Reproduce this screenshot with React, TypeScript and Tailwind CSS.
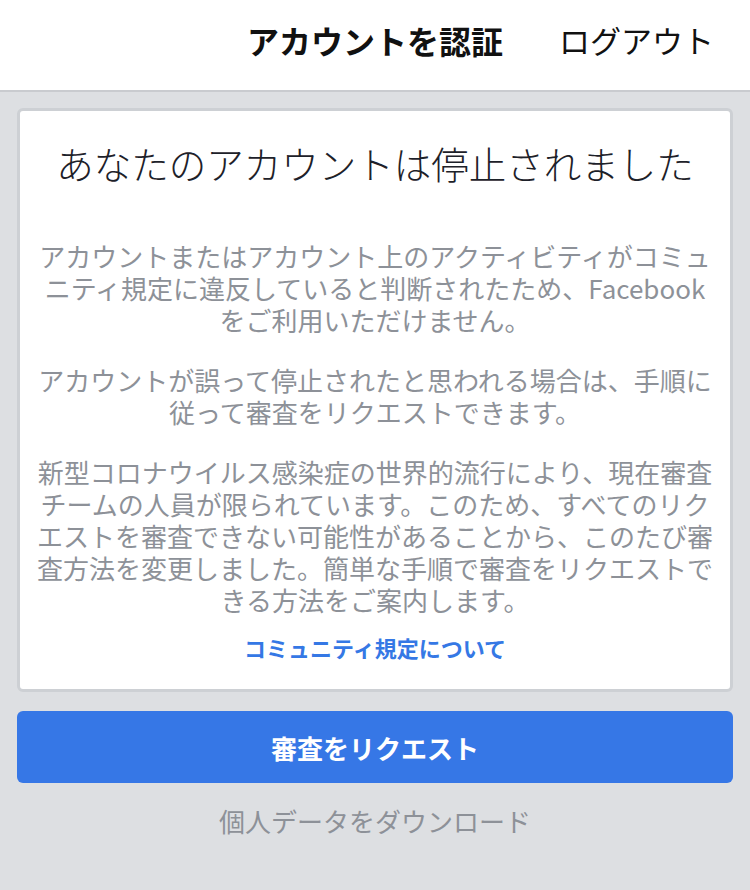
import { Fragment } from "react";

const paragraphs: string[][] = [
  [
    "アカウントまたはアカウント上のアクティビティがコミュ",
    "ニティ規定に違反していると判断されたため、Facebook",
    "をご利用いただけません。",
  ],
  [
    "アカウントが誤って停止されたと思われる場合は、手順に",
    "従って審査をリクエストできます。",
  ],
  [
    "新型コロナウイルス感染症の世界的流行により、現在審査",
    "チームの人員が限られています。このため、すべてのリク",
    "エストを審査できない可能性があることから、このたび審",
    "査方法を変更しました。簡単な手順で審査をリクエストで",
    "きる方法をご案内します。",
  ],
];

export default function App() {
  return (
    <div
      className="min-h-[890px] w-[750px] bg-[#dddfe2]"
      style={{ fontFamily: '"Noto Sans CJK JP", "Noto Sans", sans-serif' }}
    >
      <header className="relative flex h-[92px] items-start justify-center border-b-2 border-[#c9cbcf] bg-white pt-[18px]">
        <h1 className="text-[32px] font-bold leading-[44px] text-[#111]">アカウントを認証</h1>
        <button className="absolute right-[36px] top-[18px] text-[31px] leading-[44px] text-[#111]">
          ログアウト
        </button>
      </header>

      <div className="px-[17px] pt-[16px]">
        <div className="rounded-[6px] border-[3px] border-[#cdd0d4] bg-white px-[12px] pb-[27px] pt-[30px] text-center">
          <h2 className="whitespace-nowrap text-[37.5px] font-light leading-[44px] text-[#1d2129]">
            あなたのアカウントは停止されました
          </h2>
          <div className="mt-[55px] flex flex-col gap-[28px]">
            {paragraphs.map((lines, i) => (
              <p key={i} className="whitespace-nowrap text-[26px] leading-[32px] text-[#8d9198]">
                {lines.map((line, j) => (
                  <Fragment key={j}>
                    {j > 0 && <br />}
                    {line}
                  </Fragment>
                ))}
              </p>
            ))}
          </div>
          <a className="mt-[16px] block text-[22px] font-bold leading-[30px] text-[#3578e5]">
            コミュニティ規定について
          </a>
        </div>

        <button className="mt-[19px] flex h-[72px] w-full items-center justify-center rounded-[6px] bg-[#3677e6] text-[26px] font-bold text-white">
          審査をリクエスト
        </button>

        <p className="mt-[21px] text-center text-[26px] leading-[34px] text-[#8d9198]">
          個人データをダウンロード
        </p>
      </div>
    </div>
  );
}
